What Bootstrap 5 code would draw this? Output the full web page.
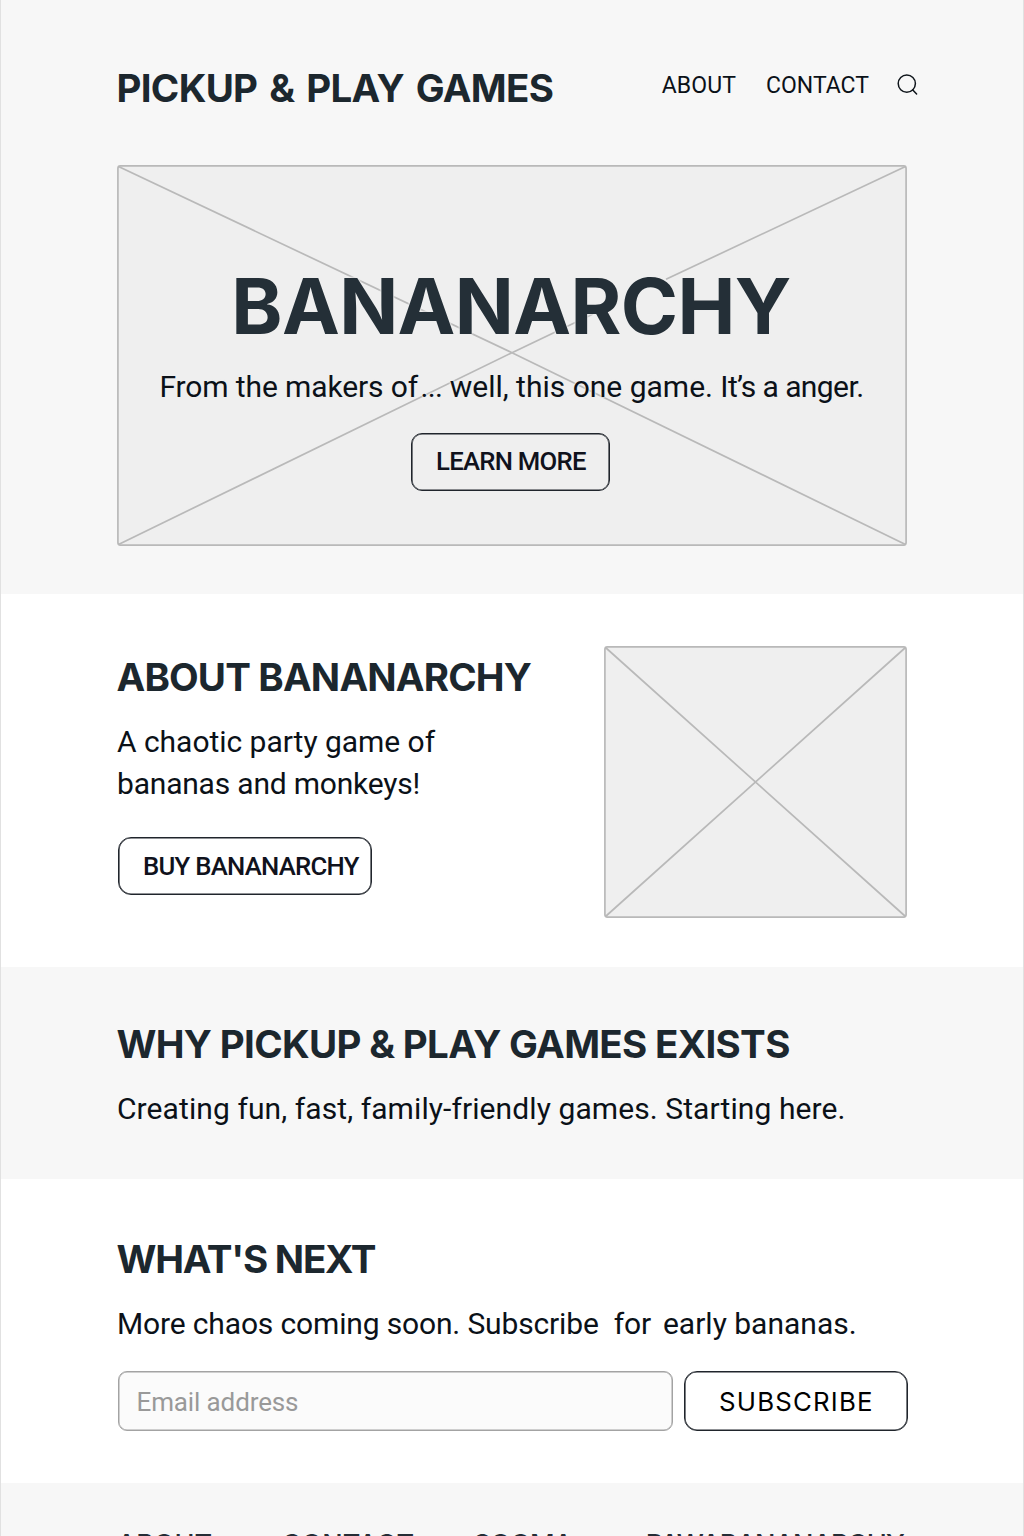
<!DOCTYPE html>
<html lang="en">
<head>
<meta charset="utf-8">
<meta name="viewport" content="width=device-width, initial-scale=1">
<title>Pickup &amp; Play Games</title>
<link href="https://cdn.jsdelivr.net/npm/bootstrap@5.3.0/dist/css/bootstrap.min.css" rel="stylesheet">
<style>
  body { font-family: Roboto, "Liberation Sans", sans-serif; color: #0b1118; background: #fff; }
  .page-frame { height: 1536px; border-left: 1px solid #e1e1e1; border-right: 1px solid #e1e1e1; }
  .band { background: #f7f7f7; }
  .wrap { width: 790px; }
  .top-band { height: 594px; padding-top: 64px; }
  .about-band { height: 373px; padding-top: 52px; }
  .why-band { height: 212px; padding-top: 53px; }
  .next-band { height: 304px; padding-top: 56px; }
  .foot-band { height: 53px; padding-top: 46px; }

  .headline { font: 700 38.5px/48px Inter, "Liberation Sans", sans-serif; color: #1c272e; margin: 0 0 0 -.5px; white-space: nowrap; }
  .site-title { letter-spacing: -.7px; word-spacing: 3.4px; }
  .title-about { letter-spacing: -.84px; margin-top: -1px; }
  .title-why { letter-spacing: -.68px; }
  .title-next { letter-spacing: -1.25px; }
  .copy { font-size: 30px; line-height: 41.5px; margin: 0; white-space: nowrap; }
  .copy-about { margin-top: 20px; letter-spacing: -.03px; }
  .copy-about .tight { letter-spacing: -.2px; }
  .copy-why { margin-top: 20px; letter-spacing: .09px; }
  .copy-next { margin: 20px 0 0; letter-spacing: -.15px; }
  .top-row { height: 101px; }
  .site-nav { margin: 7px -11px 0 0; }
  .site-nav a { font-size: 23px; line-height: 30px; color: #0b1118; }
  .site-nav .nav-about { margin-right: 30px; letter-spacing: .1px; }
  .site-nav .nav-contact { margin-right: 28px; }
  .site-nav svg { margin-top: -2px; }

  .frame-box > svg { display: block; stroke: #b9b9b9; stroke-width: 1.7; fill: none; }
  .frame-box rect { fill: #efefef; }
  .hero { height: 381px; }
  .hero-copy { padding-top: 101px; text-shadow: 0 0 2px #efefef, 0 0 2px #efefef, 0 0 3px #efefef; }
  .hero-title { font: 700 77.5px/80px Inter, "Liberation Sans", sans-serif; letter-spacing: -.65px; color: #242f37; margin: 0 2px 20px 0; }
  .hero-copy .copy { width: 704px; margin-right: 1px; }
  .copy-makers { letter-spacing: -.12px; }
  .dots { margin-left: -5px; letter-spacing: -.6px; }
  .copy-well { letter-spacing: 0; }
  .copy-anger { letter-spacing: -.6px; }
  .thumb { width: 303px; height: 272px; }

  .btn-wire { --bs-btn-color: #10121c; --bs-btn-border-color: #20252c; font-weight: 500; font-size: 25.7px; line-height: 1; border-width: 1px; box-shadow: inset 0 0 0 .6px #20252c; border-radius: 11px; letter-spacing: -.72px; padding: 1px 0 0 24px; text-align: left; white-space: nowrap; }
  .btn-learn { width: 199px; height: 58px; margin: 25px 3px 0 0; background: #efefef; }
  .btn-buy { width: 254px; height: 58px; margin: 33px 0 0 1px; border-radius: 13px; }
  .btn-sub { width: 224px; height: 60px; font: 400 25.8px/1 Inter, sans-serif; letter-spacing: 1.2px; border-radius: 13px; padding: 2px 0 0 34px; --bs-btn-color: #000; }
  .mail { width: 555px; height: 60px; border: 1px solid #a3a3a3; box-shadow: inset 0 0 0 .5px #a3a3a3; border-radius: 9px; background: #fbfbfb; font-size: 26px; letter-spacing: -.12px; padding: 2px 0 0 17.5px; margin-left: 1px; }
  .mail::placeholder { color: #999; }
  .signup { margin: 26.5px -1px 0 0; }
  .foot-links { padding: 0 3px 0 0; }
  .foot-band a { font: 500 27px/32px Inter, sans-serif; color: #252d36; white-space: nowrap; }
  .foot-band .foot-contact { margin-right: -10px; letter-spacing: .1px; }
  .foot-band .foot-sooma { letter-spacing: -.8px; margin-right: 4px; }
  .foot-band .foot-bananas { letter-spacing: -.8px; }
</style>
</head>
<body>
<div class="page-frame overflow-hidden">
  <header class="band top-band">
    <div class="wrap mx-auto">
      <div class="top-row d-flex justify-content-between align-items-start">
        <h1 class="headline site-title">PICKUP &amp; PLAY GAMES</h1>
        <nav class="site-nav d-flex">
          <a href="#" class="nav-about text-decoration-none">ABOUT</a>
          <a href="#" class="nav-contact text-decoration-none">CONTACT</a>
          <a href="#" aria-label="Search" class="d-flex align-items-center"><svg width="21" height="22" viewBox="0 0 21 22" fill="none" stroke="#10161c" stroke-width="1.5" stroke-linecap="round"><circle cx="9.8" cy="9.6" r="8.6"/><path d="M15.8 15.9 19.6 20"/></svg></a>
        </nav>
      </div>
      <div class="frame-box hero position-relative">
        <svg class="position-absolute top-0 start-0" width="790" height="381" viewBox="0 0 790 381" aria-hidden="true"><rect x=".9" y=".9" width="788.2" height="379.2" rx="2.5"/><path d="M1.5 1.5 395 187.7 788.5 379.5M1.5 379.5 395 187.7 476 149M549 114.3 788.5 1.5"/></svg>
        <div class="hero-copy position-relative d-flex flex-column align-items-center">
          <h2 class="hero-title">BANANARCHY</h2>
          <p class="copy d-flex justify-content-between"><span class="copy-makers">From the makers of</span><span class="dots">...</span><span class="copy-well">well, this one game.</span><span class="copy-anger">It’s a anger.</span></p>
          <a href="#" class="btn btn-wire btn-learn d-flex align-items-center">LEARN MORE</a>
        </div>
      </div>
    </div>
  </header>

  <section class="about-band bg-white">
    <div class="wrap mx-auto d-flex justify-content-between">
      <div class="pt-2">
        <h2 class="headline title-about">ABOUT BANANARCHY</h2>
        <p class="copy copy-about">A chaotic party game of<br><span class="tight">bananas and monkeys!</span></p>
        <a href="#" class="btn btn-wire btn-buy d-flex align-items-center">BUY BANANARCHY</a>
      </div>
      <div class="frame-box thumb"><svg width="303" height="272" viewBox="0 0 303 272" aria-hidden="true"><rect x=".9" y=".9" width="301.2" height="270.2" rx="2.5"/><path d="M1.5 1.5 301.5 270.5M1.5 270.5 301.5 1.5"/></svg></div>
    </div>
  </section>

  <section class="band why-band">
    <div class="wrap mx-auto">
      <h2 class="headline title-why">WHY PICKUP &amp; PLAY GAMES EXISTS</h2>
      <p class="copy copy-why">Creating fun, fast, family-friendly games. Starting here.</p>
    </div>
  </section>

  <section class="next-band bg-white">
    <div class="wrap mx-auto">
      <h2 class="headline title-next">WHAT'S NEXT</h2>
      <p class="copy copy-next d-flex"><span>More chaos coming soon. Subscribe</span><span style="margin-left:15px">for</span><span style="margin-left:12px;letter-spacing:0">early bananas.</span></p>
      <form class="signup d-flex justify-content-between">
        <input type="email" class="form-control mail flex-shrink-0" placeholder="Email address" aria-label="Email address">
        <button type="button" class="btn btn-wire btn-sub">SUBSCRIBE</button>
      </form>
    </div>
  </section>

  <footer class="band foot-band overflow-hidden">
    <div class="wrap foot-links mx-auto d-flex justify-content-between">
      <a href="#" class="text-decoration-none">ABOUT</a>
      <a href="#" class="foot-contact text-decoration-none">CONTACT</a>
      <a href="#" class="foot-sooma text-decoration-none">SOOMA</a>
      <a href="#" class="foot-bananas text-decoration-none">PAWABANANARCHY</a>
    </div>
  </footer>
</div>
<script src="https://cdn.jsdelivr.net/npm/bootstrap@5.3.0/dist/js/bootstrap.bundle.min.js"></script>
</body>
</html>
